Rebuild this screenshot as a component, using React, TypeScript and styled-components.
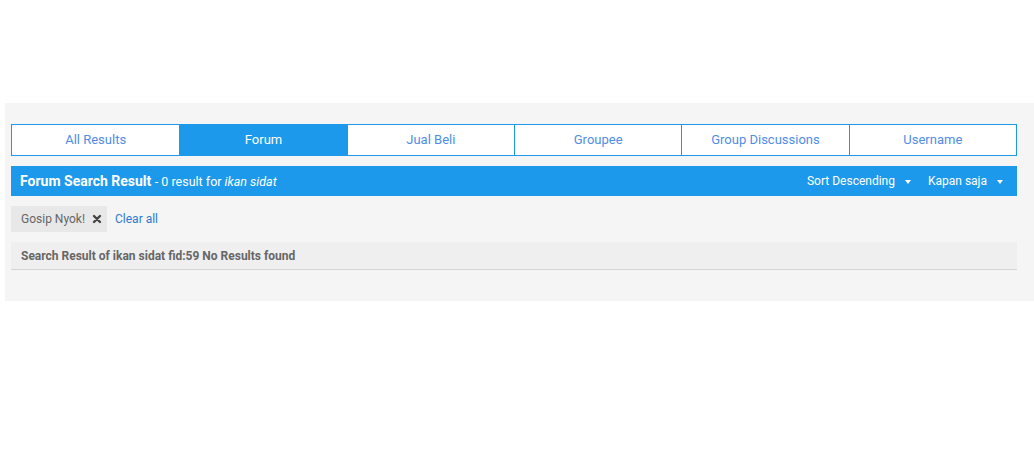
import styled, { createGlobalStyle } from 'styled-components';

const GlobalStyle = createGlobalStyle`
  html, body {
    margin: 0;
    padding: 0;
    background: #fff;
    font-family: Roboto, "Liberation Sans", Arial, sans-serif;
  }
`;

const Page = styled.div`
  padding-top: 103px;
  padding-left: 5px;
`;

const Panel = styled.div`
  background: #f5f5f5;
  padding: 21px 17px 31px 6px;
`;

const Tabs = styled.div`
  display: grid;
  grid-template-columns: repeat(6, 1fr);
  border: 1px solid #1d99ec;
  background: #fff;
`;

const Tab = styled.div<{ $active?: boolean }>`
  height: 30px;
  padding-bottom: 1px;
  box-sizing: border-box;
  display: flex;
  align-items: center;
  justify-content: center;
  font-size: 13px;
  color: ${(p) => (p.$active ? '#fff' : '#4f8ee6')};
  background: ${(p) => (p.$active ? '#1d99ec' : '#fff')};
  border-left: 1px solid #1d99ec;
  &:first-child {
    border-left: none;
  }
`;

const Header = styled.div`
  margin-top: 10px;
  height: 30px;
  background: #1d99ec;
  color: #fff;
  display: flex;
  align-items: center;
  justify-content: space-between;
  padding: 0 14px 0 9px;
`;

const Title = styled.div`
  font-size: 14px;
  strong {
    font-weight: 700;
  }
  em {
    font-style: italic;
  }
`;

const Sub = styled.span`
  font-size: 12.5px;
`;

const Controls = styled.div`
  display: flex;
  gap: 17px;
`;

const Dropdown = styled.span`
  display: flex;
  align-items: center;
  font-size: 12px;
  &::after {
    content: '';
    margin-left: 10px;
    border-top: 4px solid #fff;
    border-left: 3px solid transparent;
    border-right: 3px solid transparent;
    margin-top: 2px;
  }
`;

const Filters = styled.div`
  margin-top: 10px;
  display: flex;
  align-items: center;
  gap: 8px;
`;

const Chip = styled.span`
  display: flex;
  align-items: center;
  height: 26px;
  padding: 0 5px 0 10px;
  background: #e8e8e8;
  color: #666;
  font-size: 12px;
  gap: 7px;
`;

const ClearLink = styled.a`
  color: #2a7bd4;
  font-size: 12px;
  text-decoration: none;
`;

const ResultBar = styled.div`
  margin-top: 10px;
  height: 27px;
  background: #efefef;
  border-bottom: 1px solid #d4d4d4;
  display: flex;
  align-items: center;
  padding-left: 10px;
  font-size: 12px;
  font-weight: 700;
  color: #666;
`;

const tabs = ['All Results', 'Forum', 'Jual Beli', 'Groupee', 'Group Discussions', 'Username'];

export default function App() {
  return (
    <>
      <GlobalStyle />
      <Page>
        <Panel>
          <Tabs>
            {tabs.map((t) => (
              <Tab key={t} $active={t === 'Forum'}>
                {t}
              </Tab>
            ))}
          </Tabs>
          <Header>
            <Title>
              <strong>Forum Search Result</strong>{' '}
              <Sub>
                - 0 result for <em>ikan sidat</em>
              </Sub>
            </Title>
            <Controls>
              <Dropdown>Sort Descending</Dropdown>
              <Dropdown>Kapan saja</Dropdown>
            </Controls>
          </Header>
          <Filters>
            <Chip>
              Gosip Nyok!
              <svg width="10" height="10" viewBox="0 0 10 10">
                <path d="M2 2 L8 8 M8 2 L2 8" stroke="#444" strokeWidth="2.4" strokeLinecap="round" />
              </svg>
            </Chip>
            <ClearLink href="#">Clear all</ClearLink>
          </Filters>
          <ResultBar>Search Result of ikan sidat fid:59 No Results found</ResultBar>
        </Panel>
      </Page>
    </>
  );
}
